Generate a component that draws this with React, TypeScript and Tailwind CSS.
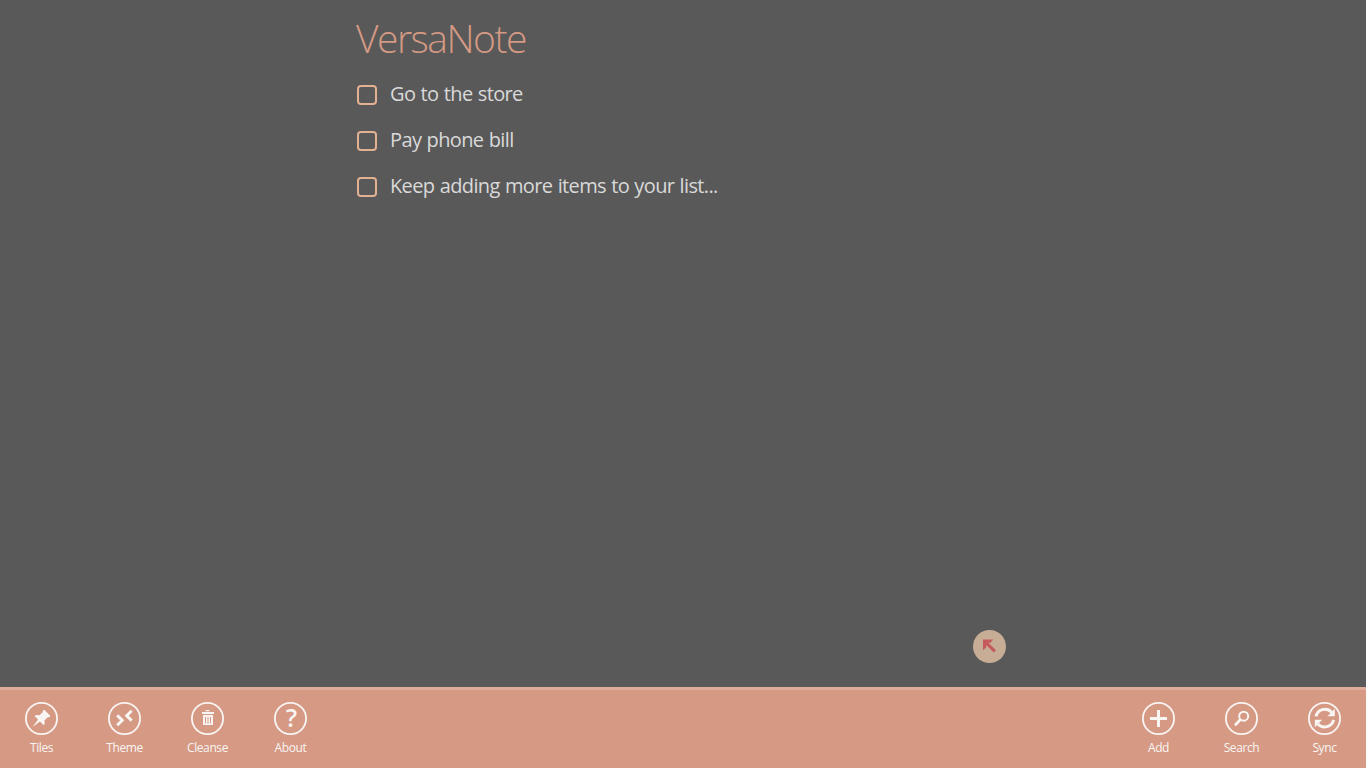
import type { ReactNode } from 'react';

interface Command {
  label: string;
  icon: ReactNode;
}

const notes = ['Go to the store', 'Pay phone bill', 'Keep adding more items to your list...'];

const leftCommands: Command[] = [
  {
    label: 'Tiles',
    icon: (
      <path
        fill="currentColor"
        d="M18.2 8h1.4L25 13.4v1.5l-2.2.4-3.4 3.3c.5 1.9.4 3.4-.6 4.6l-3.9-3.8-6.5 5.2-.3-.3 5-6.7-3.6-3.7c1.3-1 3-1 4.7-.5l3.5-3.2z"
      />
    ),
  },
  {
    label: 'Theme',
    icon: (
      <path
        fill="none"
        stroke="currentColor"
        strokeWidth="3"
        d="M9.2 13.4l5 4.9-5 4.9M23.7 8.8l-5 4.9 5 4.9"
      />
    ),
  },
  {
    label: 'Cleanse',
    icon: (
      <path
        fill="currentColor"
        fillRule="evenodd"
        d="M14.5 8h4v1.2h-4zM11 10h12v2H11zM12 13h10v10H12zM14 15v6.5h1V15zM16.5 15v6.5h1V15zM19 15v6.5h1V15z"
      />
    ),
  },
  {
    label: 'About',
    icon: (
      <text x="17.4" y="25.3" textAnchor="middle" fill="currentColor" fontSize="25" fontWeight="600">
        ?
      </text>
    ),
  },
];

const rightCommands: Command[] = [
  {
    label: 'Add',
    icon: <path stroke="currentColor" strokeWidth="3" d="M16.5 8v17M8 16.5h17" />,
  },
  {
    label: 'Search',
    icon: (
      <g fill="none" stroke="currentColor">
        <circle cx="18.7" cy="14.2" r="4.5" strokeWidth="2" />
        <path strokeWidth="2.8" strokeLinecap="round" d="M15 18l-4.3 4.4" />
      </g>
    ),
  },
  {
    label: 'Sync',
    icon: (
      <>
        <path
          fill="none"
          stroke="currentColor"
          strokeWidth="3"
          d="M7.9 14.4A9.2 9.2 0 0 1 23.6 10.2M25.6 17.8A9.2 9.2 0 0 1 9.9 22"
        />
        <path fill="currentColor" d="M26.8 6.8v7.4h-7.4zM6.8 25.2v-7.4h7.4z" />
      </>
    ),
  },
];

function CommandButton({ label, icon }: Command) {
  return (
    <button className="flex w-[83px] flex-col items-center pt-3 text-[#f9f5f3]">
      <svg className="h-[33px] w-[33px] overflow-visible" viewBox="0 0 33 33">
        <circle cx="16.5" cy="16.5" r="15.6" fill="none" stroke="currentColor" strokeWidth="1.8" />
        {icon}
      </svg>
      <span className="mt-1 text-[12px] leading-[18px] tracking-[-0.4px]">{label}</span>
    </button>
  );
}

export default function App() {
  return (
    <div className="flex h-screen w-full flex-col overflow-hidden bg-[#595959] font-['Open_Sans','Noto_Sans',sans-serif]">
      <main className="relative flex-1 pl-[357px] pt-[11px]">
        <h1 className="-ml-px text-[39px] font-light leading-[54px] tracking-[-1.5px] text-[#d59984]">
          VersaNote
        </h1>
        <ul className="mt-[7px]">
          {notes.map((note) => (
            <li key={note} className="flex h-[46px] items-center">
              <span className="h-5 w-5 rounded-[4px] border-2 border-[#e2b192]" />
              <span className="ml-[13px] pb-[2px] text-[20px] leading-6 tracking-[-0.63px] [word-spacing:0.7px] text-[#d9d9d9]">
                {note}
              </span>
            </li>
          ))}
        </ul>

        {/* Floating corner button */}
        <button className="absolute bottom-6 left-[973px] h-[33px] w-[33px] rounded-full bg-[#c8ad96]">
          <svg viewBox="0 0 33 33" fill="#c45a5c">
            <path d="M10 9.5h10.2l-2.6 3.2h-2.3l7.7 7.6-2.3 2.3-7.5-7.6v2.6L10 20.2z" />
          </svg>
        </button>
      </main>

      {/* App bar */}
      <footer className="flex h-[81px] justify-between border-t-3 border-[#dfac9c] bg-[#d59984]">
        <div className="flex">
          {leftCommands.map((command) => (
            <CommandButton key={command.label} {...command} />
          ))}
        </div>
        <div className="flex">
          {rightCommands.map((command) => (
            <CommandButton key={command.label} {...command} />
          ))}
        </div>
      </footer>
    </div>
  );
}
